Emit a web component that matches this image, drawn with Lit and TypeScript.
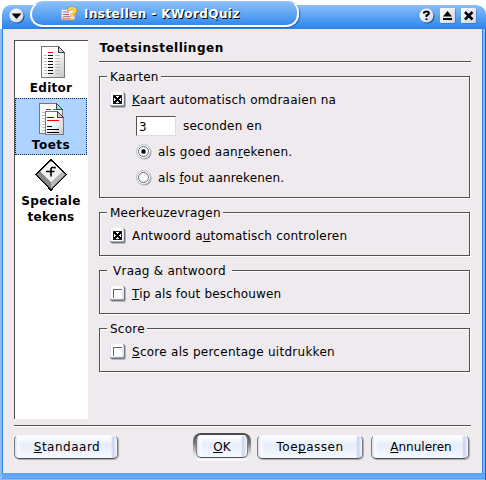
import { LitElement, html, css, svg } from "lit";
import { customElement, property } from "lit/decorators.js";

const doc = (x: number, y: number, w: number, h: number) => svg`
  <path d="M${x + 0.5} ${y + 0.5}h${w - 7}l6 6v${h - 7}h-${w - 1}z" fill="url(#paper)" stroke="#777"/>
  <path d="M${x + w - 6.5} ${y + 0.5}v6h6z" fill="#ccc" stroke="#444"/>`;

const rows = (x: number, w: number, ys: number[], color: string) =>
  ys.map((y) => svg`<rect x=${x} y=${y} width=${w} height="1" fill=${color}/>`);

const paper = svg`<defs><linearGradient id="paper" x1="0" y1="0" x2="1" y2="1">
  <stop offset=".45" stop-color="#fff"/><stop offset="1" stop-color="#c4c4c4"/></linearGradient></defs>`;

const editorLines = [9, 12, 15, 18, 21, 24, 27];

const editorIcon = html`<svg width="32" height="32" shape-rendering="crispEdges">
  ${paper}${doc(6, 0, 24, 32)}
  ${rows(13, 5, [6], "#f00")}${rows(13, 5, editorLines, "#000")}
  ${rows(9, 3, editorLines, "#bbb")}${rows(20, 5, editorLines, "#bbb")}
</svg>`;

const testIcon = html`<svg width="32" height="32" shape-rendering="crispEdges">
  ${paper}${doc(4, 0, 24, 31)}
  ${rows(11, 5, [6], "#f00")}${rows(7, 3, editorLines, "#bbb")}${rows(18, 3, [6], "#f44")}
  ${doc(10, 8, 19, 24)}
  ${rows(12, 7, [14], "#00f")}${rows(12, 12, [17], "#f00")}
  ${rows(12, 5, [23], "#000")}${rows(12, 12, [26, 29], "#000")}
</svg>`;

const keyIcon = html`<svg width="32" height="32">
  <path d="M16 1L31 15.500L16 31L1 15.500z" fill="#ddd" stroke="#000" stroke-width="1.500" shape-rendering="crispEdges"/>
  <path d="M1.500 15.500L5.500 12.500L16 23V30z" fill="#888"/>
  <path d="M30.500 15.500L27 12.500L16 23V30z" fill="#b8b8b8"/>
  <path d="M16 2L27 12.500L16 23L5.500 12.500z" fill="#f2f2f2"/>
  <path d="M16 2L5.500 12.500L2 15.500z" fill="#999"/>
  <path d="M20 9.500v-1h-3l-1 1v8M11 12.500h8.500" fill="none" stroke="#000" stroke-width="1.600"/>
</svg>`;

@customElement("group-box")
class GroupBox extends LitElement {
  @property() label = "";
  static styles = css`
    :host { display: block; box-sizing: border-box; border: 1px solid #505050; box-shadow: inset 1px 1px #fff, 1px 1px #fff; }
    .legend { width: fit-content; height: 16px; margin: -8px 0 7px 7px; padding: 0 2px 0 3px; background: #eeeaee; white-space: pre; letter-spacing: 0.24px; }
    :host(.spaced) .legend { padding-left: 2px; }
  `;
  render() {
    return html`<div class="legend">${this.label}</div><slot></slot>`;
  }
}

@customElement("app-root")
class AppRoot extends LitElement {
  static styles = css`
    :host { display: block; width: 486px; height: 480px; overflow: hidden; background: #fff; font: 12px/16px "DejaVu Sans", sans-serif; color: #000; }
    * { box-sizing: border-box; }
    svg { display: block; flex: none; }
    u { text-decoration: underline 1px; text-underline-offset: 1px; text-decoration-skip-ink: none; }
    .window { height: 480px; display: flex; flex-direction: column; }
    .titlebar { height: 29px; flex: none; display: flex; background: linear-gradient(#8cbefa, #5ea5f4 45%, #2b83e8) 0 5px / 100% 24px no-repeat; clip-path: path("M2 29V14Q3 5 12 5H30Q36 0 42 0H288Q298 0 301 5H476Q486 6 486 15V29z"); }
    .titlebar .menu { margin: 8px 0 0 9px; }
    .tab { width: 269px; height: 26px; margin: 1px 0 0 5px; display: flex; border: solid #fff; border-width: 1px 2px 2px; border-top-color: #9ac8fb; border-radius: 15px 12px 14px 14px; background: linear-gradient(#8abdf9, #62a8f5 50%, #3389eb); box-shadow: 1px 1px 1px #2568b0; }
    .tab svg { margin: 4px 0 0 29px; }
    .title { margin: 4px 0 0 6px; font-weight: bold; color: #fff; text-shadow: 1px 1px #000; letter-spacing: 0.42px; white-space: nowrap; }
    .controls { display: flex; gap: 5px; margin: 8px 0 0 auto; padding-right: 9px; }
    .body { flex: 1; display: flex; flex-direction: column; background: #eeeaee; border-left: 2px solid #8fbcf5; border-right: 1px solid #1f5ca8; border-bottom: 1px solid #1f5ca8; }
    .mid { flex: 1; display: flex; flex-direction: column; border-left: 1px solid #2f80dc; border-right: 2px solid #8cbcf8; }
    .client { flex: 1; display: flex; flex-direction: column; border-right: 1px solid #2f80dc; }
    .bottom { height: 7px; flex: none; background: linear-gradient(#5ba3f5, #67a9f6 5px, #4a94ec 6px, #8cbcf8 6px); }
    .main { display: flex; height: 390px; padding: 11px 0 0 11px; }
    .side { width: 74px; height: 379px; background: #fff; border: solid #505050; border-width: 1px 0 0 1px; font-weight: bold; text-align: center; }
    .item { display: flex; flex-direction: column; align-items: center; width: 72px; }
    .item span { margin-top: 2px; }
    .item.editor { height: 57px; padding-top: 5px; letter-spacing: 0.25px; }
    .item.test { height: 57px; padding-top: 4px; background: #aed3ff; border: 1px dotted #002050; letter-spacing: 0.5px; }
    .item.special { padding-top: 4px; letter-spacing: 0.3px; }
    .page { width: 372px; margin-left: 11px; display: flex; flex-direction: column; }
    .heading { height: 22px; border-bottom: 1px solid #505050; box-shadow: 0 1px #fff; font-weight: bold; letter-spacing: 0.5px; padding-left: 0.5px; }
    .groups { display: flex; flex-direction: column; gap: 14px; padding-right: 1px; margin-top: 14px; }
    .tall { height: 122px; }
    .short { height: 44px; }
    .row { display: flex; padding-left: 10px; gap: 6px; height: 16px; letter-spacing: 0.22px; white-space: nowrap; }
    .row.tip { letter-spacing: 0.17px; }
    .row.score { letter-spacing: 0.27px; }
    .row.sub { padding-left: 36px; height: 26px; }
    .row.num { height: 28px; padding-left: 36px; margin-top: 8px; gap: 7px; }
    .row.num span { margin-top: 2px; }
    .row.good { letter-spacing: 0.26px; }
    .row.wrong { letter-spacing: 0.16px; }
    .input { width: 40px; height: 20px; border: 1px solid; border-color: #505050 #ddd #ddd #505050; background: #fff; padding: 2px 0 0 2px; }
    .footer { margin: 6px 0 0 11px; width: 457px; height: 48px; border-top: 1px solid #505050; box-shadow: inset 0 1px #fff; display: flex; align-items: flex-start; padding-top: 9px; }
    .btn { height: 24px; flex: none; padding-top: 3px; text-align: center; letter-spacing: 0.5px; border-radius: 5px; border: 1px solid; border-color: #f4f6fc #777b84 #4c5057 #777b84; background: linear-gradient(90deg, #d8dfec, #fbfcff 3px, transparent 6px, transparent calc(100% - 6px), #c9d4ea calc(100% - 4px), #f4f7ff 100%), linear-gradient(#fff, #e6edfa 40%, #f6f9ff); box-shadow: 1px 1px 1px #aaa; }
    .std { width: 104px; margin-right: 75px; padding-left: 2px; }
    .ring { width: 58px; height: 28px; margin: -2px 6px 0 0; padding: 2px 3px 3px; border-radius: 8px; background: linear-gradient(#484848, #777 35%, #ddd 75%, #fff); }
    .ok { height: 23px; letter-spacing: 0.2px; box-shadow: none; }
    .apply { width: 106px; margin-right: 8px; }
    .cancel { width: 98px; letter-spacing: 0; padding-left: 2px; }
  `;

  private check(on: boolean) {
    return html`<svg width="16" height="16">
      <rect x="1" y="1" width="15" height="15" rx="2" fill="#b4b7be"/>
      <rect width="15" height="15" rx="2" fill="#6f7580"/>
      <rect width="14" height="13.500" rx="1.500" fill="#dfe5f2"/>
      <rect x="1" width="12" height="13" fill="#fff"/>
      ${on
        ? svg`<g shape-rendering="crispEdges"><path d="M3.500 3.500h8v8h-8z" fill="#fff" stroke="#222"/><path d="M4 4h2v1h1v1h1v-1h1v-1h2v2h-1v1h-1v1h1v1h1v2h-2v-1h-1v-1h-1v1h-1v1h-2v-2h1v-1h1v-1h-1v-1h-1z"/></g>`
        : svg`<path d="M3.500 12V3.500H12" fill="none" stroke="#666" shape-rendering="crispEdges"/><path d="M12.500 4V12.500H4" fill="none" stroke="#e4e6ec" shape-rendering="crispEdges"/>`}
    </svg>`;
  }

  private radio(on: boolean) {
    return html`<svg width="16" height="16">
      <circle cx="8.500" cy="8.500" r="7" fill="#999"/>
      <circle cx="7.500" cy="7.500" r="7" fill="#f8f9fd" stroke="#b8becb"/>
      <circle cx="7.500" cy="7.500" r="5" fill="#fff" stroke="#667"/>
      ${on ? svg`<rect x="5.500" y="5.500" width="4" height="4" rx=".5"/>` : ""}
    </svg>`;
  }

  private control(kind: string) {
    const round = kind === "menu" || kind === "help";
    return html`<svg class=${kind} width="16" height="17">
      <defs><linearGradient id="face" x1="0" y1="0" x2="1" y2="1"><stop stop-color="#fff"/><stop offset="1" stop-color="#ccd4e4"/></linearGradient></defs>
      ${round
        ? svg`<circle cx="8.500" cy="8.500" r="7" fill="#24568c"/><circle cx="7.500" cy="7.500" r="7" fill="url(#face)"/>`
        : svg`<rect x="1" y="1" width="14.500" height="14.500" rx="1" fill="#3a6da6"/><rect width="15" height="15" rx="1" fill="url(#face)"/>`}
      ${kind === "menu" ? svg`<path d="M2.500 5.500h10L7.500 11z"/>` : ""}
      ${kind === "help" ? svg`<path d="M5 5.500V4.500Q5.500 3.500 7.500 3.500T10 5Q10 6.500 7.500 7.500V9M7.500 10.500V12" fill="none" stroke="#000" stroke-width="2"/>` : ""}
      ${kind === "up" ? svg`<path d="M7.500 3L12 8.500H3zM3 10h9v2H3z"/>` : ""}
      ${kind === "close" ? svg`<path d="M4 4l7.500 7.500M11.500 4L4 11.500" stroke="#000" stroke-width="2.500"/>` : ""}
    </svg>`;
  }

  render() {
    return html`<div class="window">
      <div class="titlebar">
        ${this.control("menu")}
        <div class="tab">
          <svg width="17" height="16">
            <rect x=".5" y="3.500" width="13" height="10" fill="#f4eef6" stroke="#c4b3d8"/>
            <path d="M2 6h6" stroke="#8a78c0"/><path d="M2 8.500h6" stroke="#e05050"/><path d="M2 10.500h7" stroke="#a080b0"/>
            <path d="M1 12.500h8" stroke="#ff9040" stroke-width="1.500"/>
            <path d="M7.500 5Q7.500 2 11 2T14.500 4.500Q14.500 6.500 11 8.500V10.500M11 12V14.500" fill="none" stroke="#d88a10" stroke-width="3"/>
            <path d="M7.500 4.500Q7.500 2 11 2T14.500 4.500Q14.500 6.500 11 8V10.500M11 12V14" fill="none" stroke="#ffd848" stroke-width="2"/>
          </svg>
          <div class="title">Instellen - KWordQuiz</div>
        </div>
        <div class="controls">${this.control("help")}${this.control("up")}${this.control("close")}</div>
      </div>
      <div class="body"><div class="mid"><div class="client">
        <div class="main">
          <div class="side">
            <div class="item editor">${editorIcon}<span>Editor</span></div>
            <div class="item test">${testIcon}<span>Toets</span></div>
            <div class="item special">${keyIcon}<span>Speciale<br />tekens</span></div>
          </div>
          <div class="page">
            <div class="heading">Toetsinstellingen</div>
            <div class="groups">
              <group-box class="tall" label="Kaarten">
                <div class="row">${this.check(true)}<span><u>K</u>aart automatisch omdraaien na</span></div>
                <div class="row num"><div class="input">3</div><span>seconden en</span></div>
                <div class="row sub good">${this.radio(true)}<span>als goed aan<u>r</u>ekenen.</span></div>
                <div class="row sub wrong">${this.radio(false)}<span>als <u>f</u>out aanrekenen.</span></div>
              </group-box>
              <group-box class="short" label="Meerkeuzevragen">
                <div class="row">${this.check(true)}<span>Antwoord a<u>u</u>tomatisch controleren</span></div>
              </group-box>
              <group-box class="short spaced" label=" Vraag &amp; antwoord ">
                <div class="row tip">${this.check(false)}<span><u>T</u>ip als fout beschouwen</span></div>
              </group-box>
              <group-box class="short" label="Score">
                <div class="row score">${this.check(false)}<span><u>S</u>core als percentage uitdrukken</span></div>
              </group-box>
            </div>
          </div>
        </div>
        <div class="footer">
          <div class="btn std"><u>S</u>tandaard</div>
          <div class="ring"><div class="btn ok"><u>O</u>K</div></div>
          <div class="btn apply">Toe<u>p</u>assen</div>
          <div class="btn cancel"><u>A</u>nnuleren</div>
        </div>
      </div></div><div class="bottom"></div></div>
    </div>`;
  }
}
